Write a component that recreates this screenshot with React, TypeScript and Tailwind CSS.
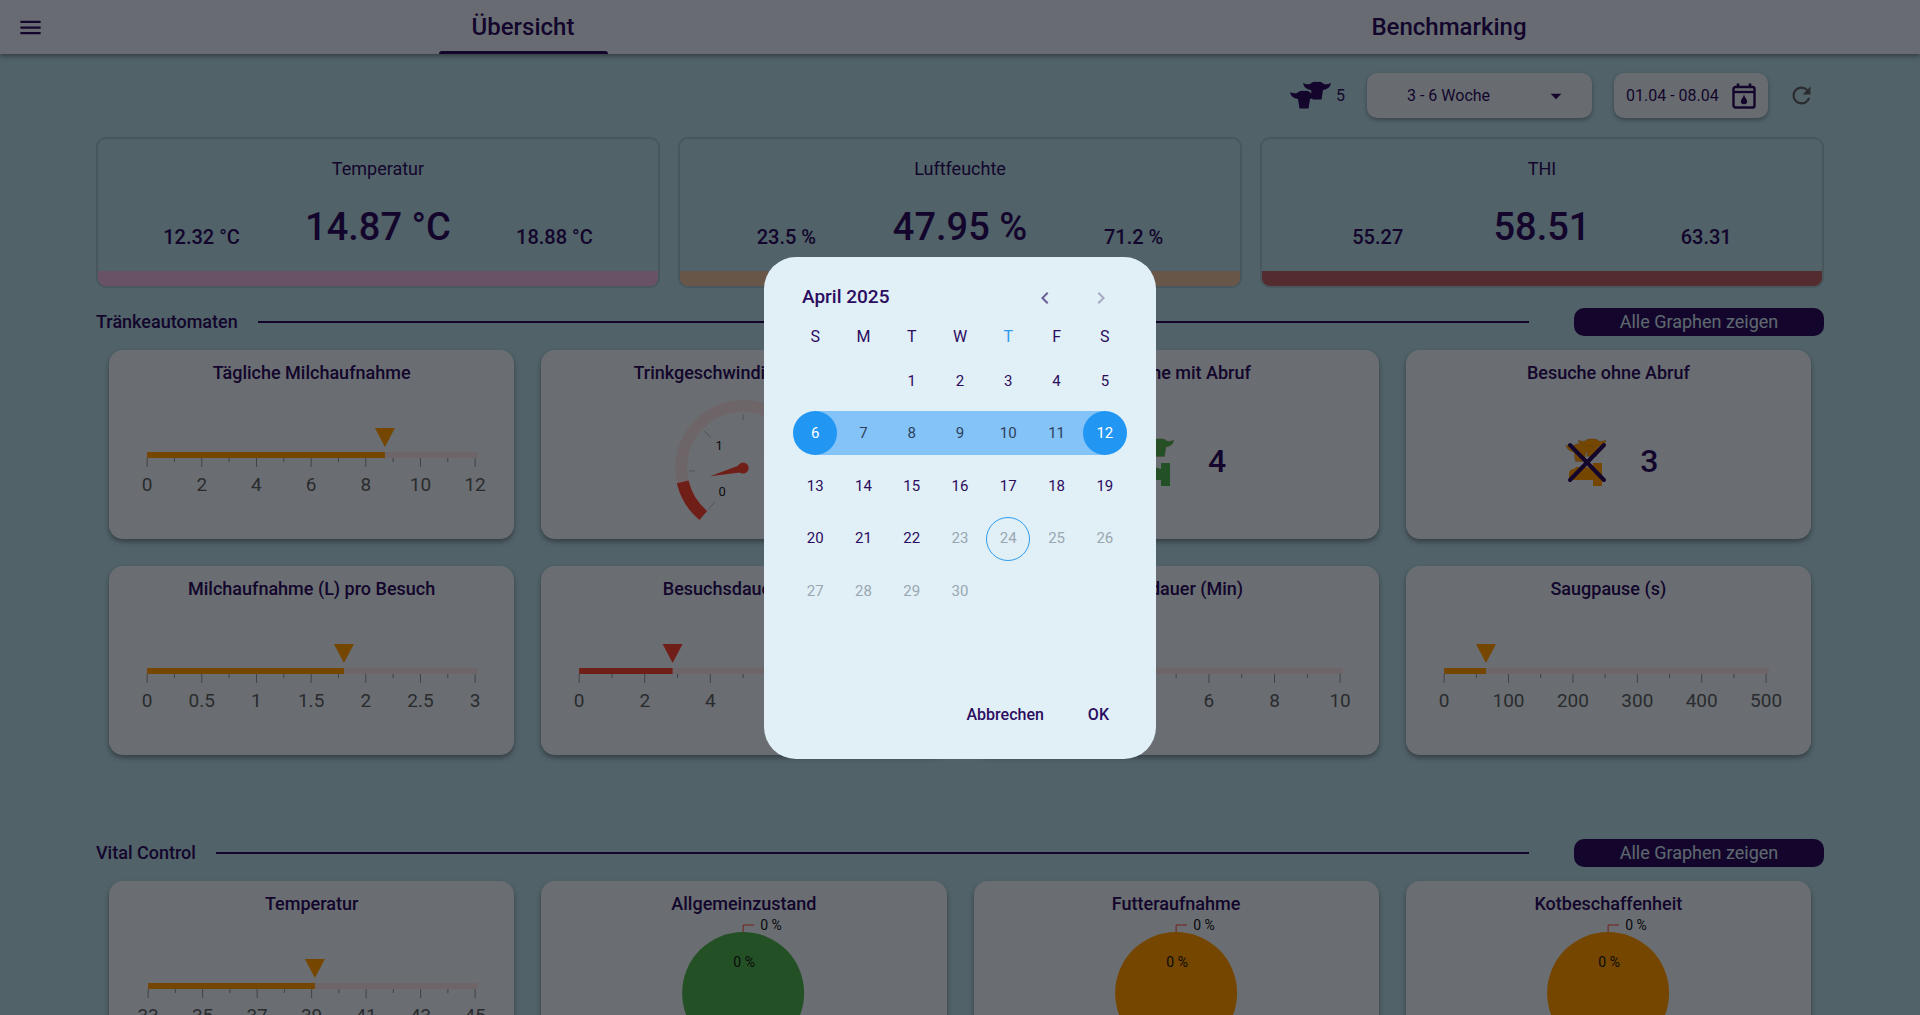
import React from "react";
import { MdArrowDropDown, MdChevronLeft, MdChevronRight, MdMenu, MdRefresh } from "react-icons/md";

const AMBER = "#ff9800";
const RED = "#f44336";
const GREEN = "#4caf50";
const INK = "#2b0c60";
const TRACK = "#eedde1";

const COW_HEAD =
  "M0 1 Q4 3 7 2 Q10 -1 14 0 Q18 -1 21 2 Q24 3 28 1 Q27 7 20 8 L18.5 17.5 H9.5 L8 8 Q1 7 0 1Z";

function CowHerdIcon() {
  return (
    <svg width="42" height="30" viewBox="0 0 42 30" aria-hidden="true" fill={INK}>
      <path d={COW_HEAD} transform="translate(13 1)" />
      <path d={COW_HEAD} transform="translate(0 10)" />
    </svg>
  );
}

function FeederIcon({ color, crossed }: { color: string; crossed?: boolean }) {
  return (
    <svg width="60" height="60" viewBox="0 0 60 60" aria-hidden="true">
      <g fill={color} stroke="#b98a6a" strokeWidth="0.4">
        <path d={COW_HEAD} transform="translate(20 8)" />
        <path d={COW_HEAD} transform="translate(8 13)" />
      </g>
      <path d="M35 32H44V55H35V49H11V43Q11 38 16 38L18 36H28L35 38Z" fill={color} />
      {crossed && (
        <path d="M12 14L46 49M46 14L12 49" stroke={INK} strokeWidth="4" strokeLinecap="round" fill="none" />
      )}
    </svg>
  );
}

function CalendarDropIcon() {
  return (
    <svg width="24" height="26" viewBox="0 0 24 26" aria-hidden="true" fill="none" stroke={INK} strokeWidth="2.4">
      <rect x="1.5" y="4" width="21" height="20.5" rx="2" />
      <path d="M1.5 9H22.5" />
      <path d="M6 0.5V4M18 0.5V4" strokeWidth="2.6" />
      <path d="M12 11.5Q12.6 14 14.6 16.4Q16.4 21 12 21.2Q7.6 21 9.4 16.4Q11.4 14 12 11.5Z" fill={INK} stroke="none" />
    </svg>
  );
}

type LinearProps = { labels: string[]; ratio: number; color: string; start?: number; length?: number };

function LinearGauge({ labels, ratio, color, start = 38, length = 328 }: LinearProps) {
  const steps = (labels.length - 1) * 2;
  const pointer = start + length * ratio;
  return (
    <svg
      className="h-[141px] w-full"
      viewBox="0 0 405 141"
      role="img"
      aria-label={`Anzeige ${labels[0]} bis ${labels[labels.length - 1]}`}
    >
      <rect x={start} y="54" width={length + 3} height="6" fill={TRACK} />
      <rect x={start} y="54" width={length * ratio} height="6" fill={color} />
      <path d={`M${pointer - 10} 30H${pointer + 10}L${pointer} 49Z`} fill={color} />
      {Array.from({ length: steps + 1 }, (_, i) => (
        <path key={i} d={`M${start + (length * i) / steps} 60v${i % 2 ? 4 : 9}`} stroke="#8c9096" />
      ))}
      {labels.map((label, i) => (
        <text
          key={label}
          x={start + (length * 2 * i) / steps}
          y="93"
          textAnchor="middle"
          fontSize="19"
          fill="#5c5f66"
        >
          {label}
        </text>
      ))}
    </svg>
  );
}

const CX = 202;
const CY = 70;

function polar(angle: number, radius: number) {
  const a = (angle * Math.PI) / 180;
  return `${(CX + radius * Math.cos(a)).toFixed(2)} ${(CY + radius * Math.sin(a)).toFixed(2)}`;
}

function arc(from: number, to: number, radius: number) {
  return `M${polar(from, radius)}A${radius} ${radius} 0 ${to - from > 180 ? 1 : 0} 1 ${polar(to, radius)}`;
}

function RadialGauge() {
  return (
    <svg className="h-[141px] w-full" viewBox="0 0 405 141" role="img" aria-label="Trinkgeschwindigkeit">
      <g fill="none">
        <path d={arc(130, 410, 62)} stroke={TRACK} strokeWidth="12" />
        <path d={arc(130, 167, 62)} stroke={RED} strokeWidth="12" />
        {Array.from({ length: 7 }, (_, i) => {
          const angle = 130 + (280 * i) / 6;
          return (
            <path
              key={i}
              d={`M${polar(angle, 54)}L${polar(angle, i % 2 ? 48 : 44)}`}
              stroke="#b3b7be"
            />
          );
        })}
      </g>
      <path d={`M${polar(77, 4)}L${polar(166, 34)}L${polar(255, 4)}Z`} fill={RED} />
      <circle cx={CX} cy={CY} r="5.5" fill={RED} />
      <g fontSize="13" textAnchor="middle" fill="#20202a">
        <text x="181" y="98">0</text>
        <text x="178" y="52">1</text>
        <text x="226" y="52">2</text>
        <text x="228" y="98">3</text>
      </g>
    </svg>
  );
}

function PieBody({ color }: { color: string }) {
  return (
    <svg className="-mt-3 h-[153px] w-full" viewBox="0 0 405 153" role="img" aria-label="Verteilung">
      <circle cx={CX} cy="76" r="61" fill={color} />
      <path d="M202 15V8H213" stroke={RED} fill="none" />
      <g fontSize="14" fill="#15151a">
        <text x="219" y="13">0 %</text>
        <text x="203" y="50" textAnchor="middle">0 %</text>
      </g>
    </svg>
  );
}

function CountBody({ color, count, crossed }: { color: string; count: number; crossed?: boolean }) {
  return (
    <div className="flex h-[126px] items-center justify-center gap-[22px]">
      <FeederIcon color={color} crossed={crossed} />
      <span className="text-[32px] font-medium">{count}</span>
    </div>
  );
}

function Card({ title, children }: { title: string; children: React.ReactNode }) {
  return (
    <article className="h-[189px] overflow-hidden rounded-[14px] bg-[#e6eff8] shadow-[0_3px_5px_rgba(0,0,0,0.35)]">
      <h3 className="mb-0.5 flex h-[46px] items-center justify-center text-lg font-medium">{title}</h3>
      {children}
    </article>
  );
}

function SectionHeader({ title }: { title: string }) {
  return (
    <div className="flex h-7 items-center">
      <h2 className="text-lg font-medium">{title}</h2>
      <div className="mr-[45px] ml-5 h-0.5 flex-1 bg-[#2b0c60]" />
      <button type="button" className="h-7 w-[250px] rounded-[10px] bg-[#2b0c60] text-lg text-[#cfe3f2]">
        Alle Graphen zeigen
      </button>
    </div>
  );
}

function StatCard({ title, values, stripe }: { title: string; values: string[]; stripe: string }) {
  return (
    <article className="flex h-[151px] flex-col overflow-hidden rounded-[10px] border-2 border-[#9dbecd]">
      <h3 className="mt-[18px] text-center text-lg leading-6">{title}</h3>
      <div className="mt-[22px] flex items-end justify-evenly font-medium">
        <span className="text-xl">{values[0]}</span>
        <span className="text-[38px] leading-[48px]">{values[1]}</span>
        <span className="text-xl">{values[2]}</span>
      </div>
      <div className={`mt-auto h-[15px] ${stripe}`} />
    </article>
  );
}

const GRID = "mt-[14px] grid grid-cols-4 gap-[27px] px-[13px]";

function Dashboard() {
  return (
    <div className="flex h-screen flex-col overflow-hidden bg-[#b0d5e4]">
      <header className="z-10 flex h-[54px] shrink-0 bg-[#e2ebf8] pr-2 shadow-[0_2px_5px_rgba(0,0,0,0.4)]">
        <button type="button" aria-label="Menü" className="flex w-[60px] items-center justify-center">
          <MdMenu size={27} />
        </button>
        <nav className="flex flex-1 text-2xl font-medium">
          <a href="#uebersicht" className="flex flex-1 justify-center">
            <span className="flex w-[169px] flex-col items-center justify-between">
              <span className="flex flex-1 items-center pt-0.5">Übersicht</span>
              <span className="h-[3px] w-full rounded-t-[3px] bg-[#2b0c60]" />
            </span>
          </a>
          <a href="#benchmarking" className="flex flex-1 items-center justify-center pb-px">
            Benchmarking
          </a>
        </nav>
      </header>

      <main className="flex-1 px-[5%] pt-[19px]">
        <div className="flex h-[45px] items-center justify-end">
          <CowHerdIcon />
          <span className="mr-[22px] ml-1">5</span>
          <div className="relative mr-[22px] h-full w-[225px]">
            <select
              aria-label="Altersgruppe"
              className="h-full w-full appearance-none rounded-[10px] bg-[#e2ebf5] pl-10 text-base shadow-[0_2px_4px_rgba(0,0,0,0.3)]"
            >
              <option>3 - 6 Woche</option>
            </select>
            <MdArrowDropDown size={26} className="pointer-events-none absolute top-[10px] right-[23px]" />
          </div>
          <button
            type="button"
            className="flex h-full w-[154px] items-center justify-between rounded-[10px] bg-[#e2ebf5] px-3 text-base shadow-[0_2px_4px_rgba(0,0,0,0.3)]"
          >
            01.04 - 08.04
            <CalendarDropIcon />
          </button>
          <button type="button" aria-label="Aktualisieren" className="mr-[9px] ml-5 text-[#5f6066]">
            <MdRefresh size={27} />
          </button>
        </div>

        <section className="mt-[19px] grid grid-cols-3 gap-[18px]">
          <StatCard title="Temperatur" values={["12.32 °C", "14.87 °C", "18.88 °C"]} stripe="bg-[#e5b3dd]" />
          <StatCard title="Luftfeuchte" values={["23.5 %", "47.95 %", "71.2 %"]} stripe="bg-[#e3bd9f]" />
          <StatCard title="THI" values={["55.27", "58.51", "63.31"]} stripe="bg-[#b86068]" />
        </section>

        <section className="mt-5">
          <SectionHeader title="Tränkeautomaten" />
          <div className={GRID}>
            <Card title="Tägliche Milchaufnahme">
              <LinearGauge labels={["0", "2", "4", "6", "8", "10", "12"]} ratio={0.725} color={AMBER} />
            </Card>
            <Card title="Trinkgeschwindigkeit (L/m)">
              <RadialGauge />
            </Card>
            <Card title="Besuche mit Abruf">
              <CountBody color={GREEN} count={4} />
            </Card>
            <Card title="Besuche ohne Abruf">
              <CountBody color={AMBER} count={3} crossed />
            </Card>
            <Card title="Milchaufnahme (L) pro Besuch">
              <LinearGauge labels={["0", "0.5", "1", "1.5", "2", "2.5", "3"]} ratio={0.6} color={AMBER} />
            </Card>
            <Card title="Besuchsdauer (Min)">
              <LinearGauge labels={["0", "2", "4", "6", "8", "10"]} ratio={0.285} color={RED} />
            </Card>
            <Card title="Saugdauer (Min)">
              <LinearGauge labels={["0", "2", "4", "6", "8", "10"]} ratio={0.3} color={RED} />
            </Card>
            <Card title="Saugpause (s)">
              <LinearGauge
                labels={["0", "100", "200", "300", "400", "500"]}
                ratio={0.13}
                color={AMBER}
                length={322}
              />
            </Card>
          </div>
        </section>

        <section className="mt-[84px]">
          <SectionHeader title="Vital Control" />
          <div className={GRID}>
            <Card title="Temperatur">
              <LinearGauge
                labels={["33", "35", "37", "39", "41", "43", "45"]}
                ratio={0.51}
                color={AMBER}
                start={39}
                length={327}
              />
            </Card>
            <Card title="Allgemeinzustand">
              <PieBody color={GREEN} />
            </Card>
            <Card title="Futteraufnahme">
              <PieBody color={AMBER} />
            </Card>
            <Card title="Kotbeschaffenheit">
              <PieBody color={AMBER} />
            </Card>
          </div>
        </section>
      </main>
    </div>
  );
}

const WEEKDAYS = ["S", "M", "T", "W", "T", "F", "S"];
const TODAY = 24;
const RANGE_START = 6;
const RANGE_END = 12;
const LAST_ENABLED = 22;

function Day({ day }: { day: number }) {
  const isEdge = day === RANGE_START || day === RANGE_END;
  const inRange = day > RANGE_START && day < RANGE_END;
  const disabled = day > LAST_ENABLED;
  let band = "";
  if (inRange) band = "bg-[#83c3f7]";
  if (day === RANGE_START) band = "bg-linear-to-r from-transparent from-50% to-[#83c3f7] to-50%";
  if (day === RANGE_END) band = "bg-linear-to-l from-transparent from-50% to-[#83c3f7] to-50%";
  let look = "";
  if (isEdge) look = "bg-[#2196f3] text-white";
  else if (inRange) look = "text-[#2f3f5c]";
  else if (disabled) look = "text-[#9aa7b2]";
  if (day === TODAY) look = "border border-[#2f9cee] text-[#9aa7b2]";
  return (
    <div className={`flex h-11 items-center justify-center self-center ${band}`}>
      <button type="button" disabled={disabled} className={`size-11 rounded-full ${look}`}>
        {day}
      </button>
    </div>
  );
}

function DateRangeDialog() {
  return (
    <div className="fixed inset-0 z-20 flex items-center justify-center bg-black/54">
      <div
        role="dialog"
        aria-modal="true"
        aria-label="Zeitraum wählen"
        className="flex h-[502px] w-[392px] flex-col rounded-[32px] bg-[#e1eff6] px-[27px] pt-[19px]"
      >
        <div className="flex h-11 items-center justify-between pr-4 pl-[11px]">
          <h2 className="text-[19px] font-medium">April 2025</h2>
          <div className="flex gap-8 text-[#6b5d98]">
            <button type="button" aria-label="Vorheriger Monat">
              <MdChevronLeft size={24} />
            </button>
            <button type="button" aria-label="Nächster Monat" disabled className="text-[#a5a9c2]">
              <MdChevronRight size={24} />
            </button>
          </div>
        </div>
        <div className="grid h-[35px] grid-cols-7 items-center text-center text-base">
          {WEEKDAYS.map((name, i) => (
            <span key={i} className={i === 4 ? "text-[#2f9cee]" : ""}>
              {name}
            </span>
          ))}
        </div>
        <div className="grid h-[263px] grid-cols-7 grid-rows-5 text-[15px]">
          <span className="col-span-2" />
          {Array.from({ length: 30 }, (_, i) => (
            <Day key={i} day={i + 1} />
          ))}
        </div>
        <div className="mt-[77px] flex items-center justify-end gap-5 text-base font-medium">
          <button type="button" className="px-3 py-2">
            Abbrechen
          </button>
          <button type="button" className="mr-2 px-3 py-2">
            OK
          </button>
        </div>
      </div>
    </div>
  );
}

export default function App() {
  return (
    <div className="font-[Roboto,sans-serif] text-[#2b0c60]">
      <Dashboard />
      <DateRangeDialog />
    </div>
  );
}
